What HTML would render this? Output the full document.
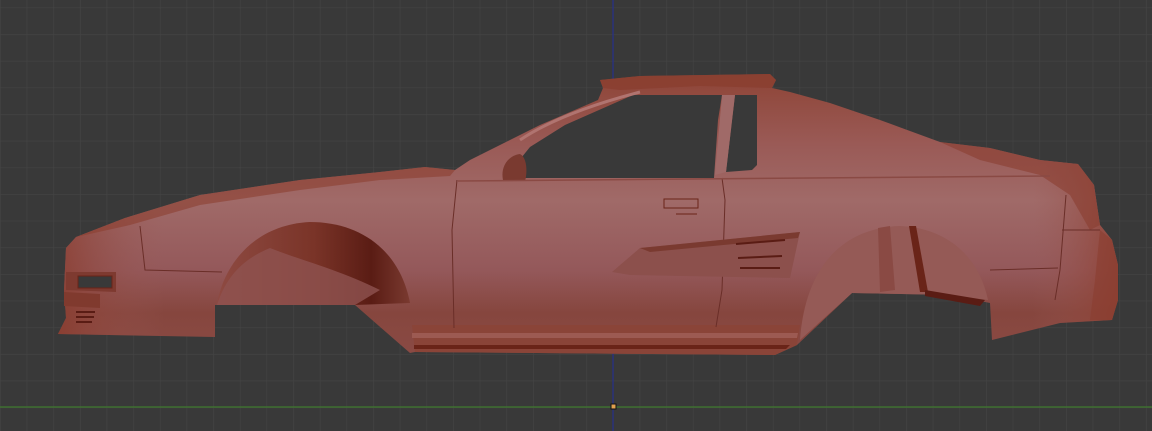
<!DOCTYPE html>
<html><head><meta charset="utf-8"><style>
html,body{margin:0;padding:0;width:1152px;height:431px;overflow:hidden;background:#393939}
svg{display:block}
</style></head><body>
<svg width="1152" height="431" viewBox="0 0 1152 431">
<defs>
<pattern id="g" x="0" y="7.5" width="26.65" height="26.65" patternUnits="userSpaceOnUse">
<rect width="26.65" height="26.65" fill="#393939"/>
<path d="M0 0V26.65M0 0H26.65" stroke="#444" stroke-width="1.2" fill="none"/>
</pattern>
<linearGradient id="body" x1="0" y1="0" x2="0" y2="1">
<stop offset="0" stop-color="#8e4436"/>
<stop offset="0.25" stop-color="#9a5a56"/>
<stop offset="0.45" stop-color="#a06a68"/>
<stop offset="0.7" stop-color="#94585a"/>
<stop offset="0.85" stop-color="#86463e"/>
<stop offset="1" stop-color="#8a4a44"/>
</linearGradient>
<linearGradient id="hor" x1="0" y1="0" x2="1" y2="0">
<stop offset="0" stop-color="#8a3c2e" stop-opacity="0.8"/>
<stop offset="0.1" stop-color="#9a5a56" stop-opacity="0"/>
<stop offset="0.92" stop-color="#9a5a56" stop-opacity="0"/>
<stop offset="1" stop-color="#8e3e2e" stop-opacity="0.8"/>
</linearGradient>
<linearGradient id="arch" x1="0" y1="0" x2="1" y2="0">
<stop offset="0" stop-color="#8e4a42"/>
<stop offset="0.5" stop-color="#7a3428"/>
<stop offset="0.8" stop-color="#5a1c14"/>
<stop offset="1" stop-color="#7a3a30"/>
</linearGradient>
</defs>
<rect width="1152" height="431" fill="url(#g)"/>
<line x1="0" y1="407" x2="1152" y2="407" stroke="#3f7a2e" stroke-width="1.2"/>
<line x1="613" y1="0" x2="613" y2="431" stroke="#26308a" stroke-width="1.2"/>

<!-- car silhouette -->
<path d="M58,334 L66,318 L64,290 L66,248 L76,237 L125,218 L200,195 L300,180 L380,172 L425,167 L455,170 L470,160 L540,125 L598,100 L603,88 L600,80 L640,76 L770,74 L776,80 L772,88 L790,92 L830,103 L880,120 L940,142 L990,148 L1040,160 L1078,164 L1094,185 L1100,225 L1112,240 L1118,265 L1118,300 L1112,320 L1060,323 L992,340 L990,303 L950,295 L852,293 L797,345 L775,355 L415,352 L410,353 L355,305 L215,305 L215,337 Z" fill="url(#body)"/>
<path d="M58,334 L66,318 L64,290 L66,248 L76,237 L125,218 L200,195 L300,180 L380,172 L425,167 L455,170 L470,160 L540,125 L598,100 L603,88 L600,80 L640,76 L770,74 L776,80 L772,88 L790,92 L830,103 L880,120 L940,142 L990,148 L1040,160 L1078,164 L1094,185 L1100,225 L1112,240 L1118,265 L1118,300 L1112,320 L1060,323 L992,340 L990,303 L950,295 L852,293 L797,345 L775,355 L415,352 L410,353 L355,305 L215,305 L215,337 Z" fill="url(#hor)"/>
<!-- roof/hood edge darker bands -->
<path d="M76,237 L125,218 L200,195 L300,180 L380,172 L425,167 L455,170 L450,176 L380,180 L300,190 L200,205 L130,225 Z" fill="#8c4030" opacity="0.6"/>
<path d="M600,80 L640,76 L770,74 L776,80 L772,88 L700,86 L620,90 L603,88 Z" fill="#8a3e30" opacity="0.8"/>
<path d="M940,142 L990,148 L1040,160 L1078,164 L1094,185 L1100,225 L1090,230 L1070,195 L1040,175 L980,160 Z" fill="#8a3e30" opacity="0.6"/>
<path d="M1100,230 L1112,240 L1118,265 L1118,300 L1112,320 L1090,320 L1095,280 Z" fill="#8a3e30" opacity="0.6"/>
<!-- front wheel arch inner -->
<path d="M217,305 C222,270 250,225 310,222 C360,222 400,250 410,303 L355,305 Z" fill="url(#arch)"/>
<path d="M217,305 C225,280 240,260 270,248 C300,260 340,270 380,290 L355,305 Z" fill="#8e5250" opacity="0.8"/>
<!-- rear wheel arch inner -->
<path d="M800,340 C805,270 840,228 900,226 C950,228 980,260 988,300 L950,295 L852,293 Z" fill="#955a56"/>
<path d="M878,228 L890,226 L895,290 L880,292 Z" fill="#8a4a44"/>
<path d="M909,226 L916,226 L928,292 L920,292 Z" fill="#6a2418"/>
<path d="M925,290 L985,300 L980,306 L925,296 Z" fill="#5a1c14"/>
<!-- rocker panel -->
<path d="M412,325 L800,325 L797,345 L775,355 L415,352 Z" fill="#8a4438"/>
<path d="M412,333 L798,333 L797,338 L412,338 Z" fill="#9c5a52"/>
<path d="M414,345 L790,345 L786,349 L414,349 Z" fill="#6a2418"/>
<!-- front bumper details -->
<path d="M66,272 L116,272 L116,292 L66,290 Z" fill="#7e3a30"/>
<rect x="78" y="276" width="34" height="12" fill="#393939" stroke="#6a2418" stroke-width="1"/>
<path d="M64,292 L100,294 L100,308 L64,306 Z" fill="#803a2e"/>
<path d="M76,312 L95,312 M76,317 L94,317 M76,322 L92,322" stroke="#5a1c14" stroke-width="2"/>
<path d="M140,226 L145,270 L222,272" stroke="#6a2e28" stroke-width="1" fill="none"/>
<!-- windows -->
<path d="M505,178 L530,147 L565,125 L633,95 L722,95 L718,120 L714,178 Z" fill="#393939"/>
<path d="M520,140 C550,120 590,105 640,92" stroke="#b07470" stroke-width="3" fill="none"/>
<path d="M735,95 L757,95 L757,165 L752,170 L726,172 Z" fill="#393939"/>
<path d="M722,95 L735,95 L726,172 L715,175 Z" fill="#a06a68"/>
<!-- mirror -->
<path d="M503,180 C500,165 510,155 520,154 C528,158 527,175 525,181 Z" fill="#7a3a30"/>
<!-- door lines -->
<path d="M457,180 L452,230 L454,328" stroke="#6a2e28" stroke-width="1" fill="none"/>
<path d="M722,178 L725,200 L722,290 L716,327" stroke="#6a2e28" stroke-width="1" fill="none"/>
<path d="M458,181 L1050,176" stroke="#8a4a44" stroke-width="1.5"/>
<!-- door handle -->
<rect x="664" y="199" width="34" height="9" fill="none" stroke="#6a2418" stroke-width="1"/>
<path d="M676,214 L697,214" stroke="#6a2418" stroke-width="1"/>
<!-- side scoop -->
<path d="M612,272 L640,248 L800,232 L790,278 L630,275 Z" fill="#8c504c"/>
<path d="M640,248 L800,232 L798,238 L650,252 Z" fill="#7a3a30"/>
<path d="M736,244 L785,240 M738,258 L782,256 M740,268 L780,268" stroke="#5a1c14" stroke-width="2"/>
<!-- rear lines -->
<path d="M1066,195 L1060,270 L1055,300" stroke="#6a2e28" stroke-width="1" fill="none"/>
<path d="M1062,230 L1100,230" stroke="#6a2e28" stroke-width="1"/>
<path d="M990,270 L1058,268" stroke="#6a2e28" stroke-width="1"/>
<!-- origin -->
<rect x="611" y="404" width="5" height="5" fill="#e0a050" stroke="#111" stroke-width="1"/>
</svg>
</body></html>
